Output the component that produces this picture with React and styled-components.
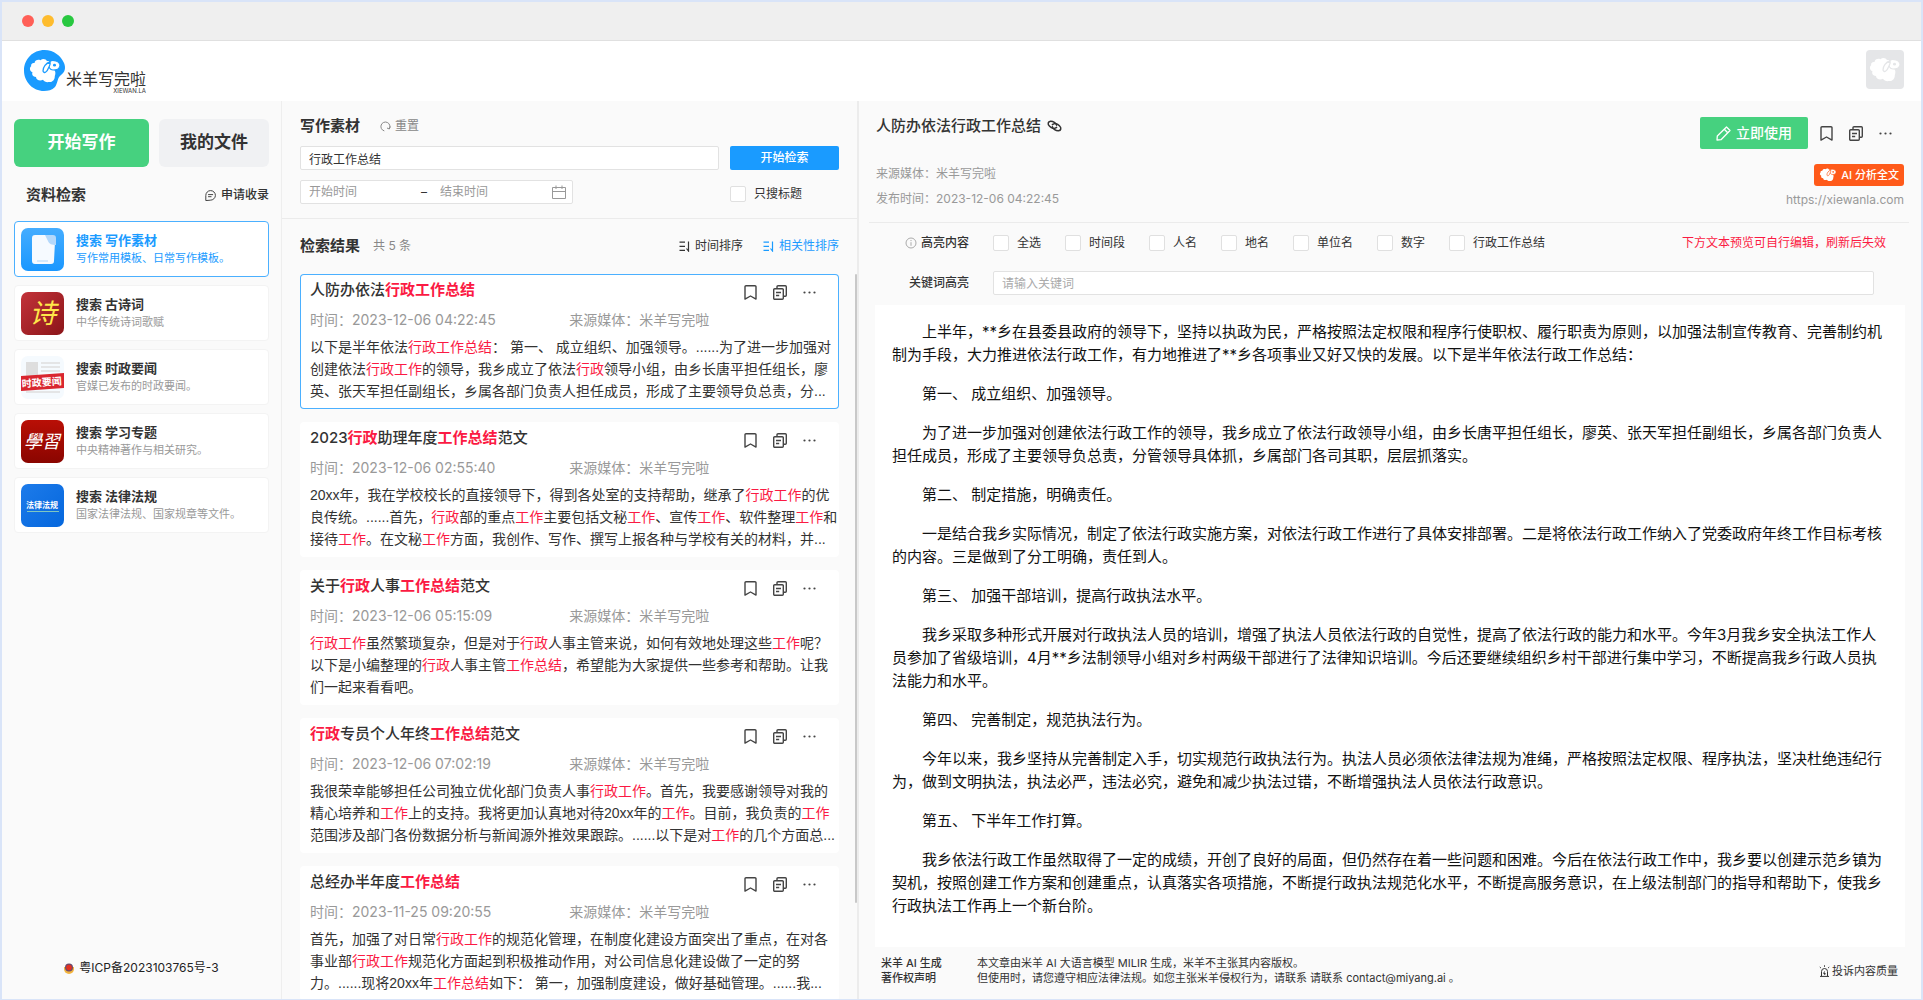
import React, {useState} from 'react';
import styled, {createGlobalStyle} from 'styled-components';

const GlobalStyle = createGlobalStyle`
  * {
    box-sizing: border-box;
  }

  body {
    margin: 0;
    color: #333;
    font-family: Inter, "Noto Sans CJK SC", sans-serif;
    font-size: 12px;
    line-height: 20px;
  }

  button, input {
    font: inherit;
    color: inherit;
  }

  button {
    padding: 0;
    border: 0;
    background: none;
    cursor: pointer;
  }

  svg {
    display: block;
    flex: none;
  }
`;

const WindowStyle = styled.div`
  display: flex;
  flex-direction: column;
  height: 100vh;
  border: solid #d9e4f8;
  border-width: 2px 2px 1px;
  background: #fafafa;
`;

const TitleBarStyle = styled.div`
  display: flex;
  align-items: center;
  gap: 8px;
  height: 39px;
  padding-left: 20px;
  background: #efefef;
  border-bottom: 1px solid #e0e0e0;
`;

const DotStyle = styled.span`
  width: 12px;
  height: 12px;
  border-radius: 50%;
  background: ${({$color}) => $color};
`;

const HeaderStyle = styled.header`
  display: flex;
  justify-content: space-between;
  align-items: flex-start;
  height: 60px;
  padding: 9px 17px 0 22px;
  background: #fff;
`;

const LogoStyle = styled.a`
  display: flex;
  color: #333;
  text-decoration: none;

  .logo {
    &_text {
      display: flex;
      flex-direction: column;
      padding-top: 20px;
      font-size: 16px;
      line-height: 18px;
    }

    &_sub {
      font-size: 6px;
      line-height: 6px;
      text-align: right;
    }
  }
`;

const AvatarStyle = styled.button`
  display: flex;
  align-items: center;
  justify-content: center;
  width: 38px;
  height: 39px;
  border-radius: 4px;
  background: #e5e6e8;
`;

const BodyStyle = styled.div`
  display: flex;
  flex: 1;
  min-height: 0;
`;

/* ---------- sidebar ---------- */

const SidebarStyle = styled.aside`
  display: flex;
  flex-direction: column;
  flex: 0 0 280px;
  padding: 18px 12px 21px;
  border-right: 1px solid #eee;
`;

const MainButtonsStyle = styled.div`
  display: flex;
  gap: 10px;
`;

const MainButton = styled.button`
  flex: ${({$primary}) => ($primary ? 27 : 22)};
  height: 48px;
  padding-bottom: 2px;
  border-radius: 6px;
  background: ${({$primary}) => ($primary ? '#46d17f' : '#f0f1f3')};
  color: ${({$primary}) => ($primary ? '#fff' : '#333')};
  font-size: 17px;
  font-weight: bold;
`;

const SideHeadStyle = styled.div`
  display: flex;
  justify-content: space-between;
  align-items: center;
  margin: 18px 0 16px;
  padding-left: 12px;
`;

const HeadingStyle = styled.h2`
  margin: 0;
  font-size: 15px;
  font-weight: bold;
  line-height: 20px;
`;

const TextButton = styled.button`
  display: flex;
  align-items: center;
  gap: ${({$gap}) => $gap || 4}px;
  color: ${({$color}) => $color || '#333'};
  font-size: ${({$small}) => ($small ? 11 : 12)}px;
  font-weight: ${({$medium}) => ($medium ? 500 : 400)};
`;

const NavStyle = styled.nav`
  display: flex;
  flex-direction: column;
  gap: 8px;
`;

const NavItem = styled.a`
  display: flex;
  align-items: center;
  gap: 12px;
  height: 56px;
  padding-left: 6px;
  border: 1px solid ${({$active}) => ($active ? '#4bb0ff' : '#f3f3f3')};
  border-radius: 4px;
  background: #fff;
  color: ${({$active}) => ($active ? '#1a9bff' : '#333')};
  text-decoration: none;

  .nav {
    &_title {
      display: block;
      font-size: 13px;
      font-weight: bold;
      line-height: 18px;
    }

    &_desc {
      display: block;
      color: ${({$active}) => ($active ? '#1a9bff' : '#999')};
      font-size: 11px;
      line-height: 18px;
    }
  }
`;

const IcpStyle = styled.a`
  display: flex;
  align-items: center;
  justify-content: center;
  gap: 5px;
  margin-top: auto;
  color: #222;
  text-decoration: none;
`;

/* ---------- search column ---------- */

const SearchColumnStyle = styled.section`
  display: flex;
  flex-direction: column;
  flex: 0 0 577px;
  border-right: 2px solid #ececec;
  position: relative;
`;

const SearchFormStyle = styled.form`
  display: flex;
  flex-direction: column;
  gap: 10px;
  height: 118px;
  padding: 15px 18px 0;
  border-bottom: 1px solid #ebebeb;
`;

const RowStyle = styled.div`
  display: flex;
  align-items: center;
  gap: ${({$gap}) => $gap || 0}px;
`;

const TextInput = styled.input`
  flex: 1;
  min-width: 0;
  height: 24px;
  padding: 0 8px;
  border: 1px solid #e2e2e2;
  border-radius: 2px;
  background: #fff;
  outline: none;

  &::placeholder {
    color: #aaa;
  }
`;

const SearchButton = styled.button`
  width: 109px;
  height: 24px;
  border-radius: 2px;
  background: #1a9bff;
  color: #fff;
  font-weight: 500;
`;

const DateRangeStyle = styled.div`
  display: flex;
  align-items: center;
  width: 273px;
  height: 24px;
  padding: 0 6px 0 8px;
  border: 1px solid #e2e2e2;
  border-radius: 2px;
  background: #fff;

  input {
    flex: 1;
    min-width: 0;
    padding: 0;
    border: 0;
    outline: none;
    background: none;
  }

  input::placeholder {
    color: #999;
  }

  span {
    width: 19px;
  }
`;

const CheckLabel = styled.label`
  display: flex;
  align-items: center;
  gap: 8px;

  input {
    appearance: none;
    width: 16px;
    height: 16px;
    margin: 0;
    border: 1px solid #e0e0e0;
    border-radius: 2px;
    background: #fff;
  }

  input:checked {
    background: #1a9bff;
  }
`;

const TitleOnlyLabel = styled(CheckLabel)`
  width: 109px;
  padding-top: 4px;
`;

const ResultHeadStyle = styled.div`
  display: flex;
  align-items: center;
  padding: 17px 18px 18px;
`;

const CountStyle = styled.span`
  flex: 1;
  margin-left: 13px;
  color: #888;
`;

const ResultListStyle = styled.div`
  display: flex;
  flex-direction: column;
  gap: 13px;
  flex: 1;
  min-height: 0;
  padding: 0 18px;
  overflow: hidden;
`;

const ScrollThumb = styled.span`
  position: absolute;
  top: 173px;
  right: 0;
  width: 2px;
  height: 70%;
  border-radius: 2px;
  background: #c8c8c8;
`;

const CardStyle = styled.article`
  flex: none;
  padding: 6px 0 7px 10px;
  border-radius: 4px;
  background: #fff;
  box-shadow: ${({$active}) => ($active ? 'inset 0 0 0 1px #4bb0ff' : 'none')};

  em {
    color: #fb1a43;
    font-style: normal;
  }

  .card {
    &_head {
      display: flex;
      justify-content: space-between;
      align-items: flex-end;
      height: 20px;
      padding-right: 23px;
    }

    &_title {
      margin: 0;
      font-size: 15px;
      font-weight: 500;
      line-height: 20px;
    }

    &_title em {
      font-weight: bold;
    }

    &_meta {
      display: flex;
      margin: 10px 0 6px;
      color: #999;
      font-size: 14px;
    }

    &_meta span {
      flex: 0 0 49%;
    }

    &_text {
      margin: 0;
      font-family: "Liberation Sans", "Noto Sans CJK SC", sans-serif;
      font-size: 14px;
      line-height: 22px;
    }
  }
`;

/* ---------- article column ---------- */

const DetailStyle = styled.section`
  display: flex;
  flex-direction: column;
  flex: 1;
  min-width: 0;
`;

const DetailHeadStyle = styled.div`
  display: flex;
  flex-direction: column;
  gap: 15px;
  margin: 0 12px 0 10px;
  padding: 16px 5px 12px 7px;
  border-bottom: 1px solid #ebebeb;
`;

const SplitStyle = styled.div`
  display: flex;
  justify-content: space-between;
  align-items: flex-start;
`;

const DetailTitle = styled.h1`
  display: flex;
  align-items: center;
  gap: 6px;
  margin: 0;
  font-size: 15px;
  font-weight: 500;
  line-height: 18px;
`;

const DetailActions = styled.div`
  display: flex;
  align-items: center;
  gap: 12px;
  padding-right: 12px;
`;

const UseButton = styled.button`
  display: flex;
  align-items: center;
  justify-content: center;
  gap: 5px;
  width: 108px;
  height: 32px;
  border-radius: 2px;
  background: #46d17f;
  color: #fff;
  font-size: 14px;
  font-weight: 500;
`;

const ColumnStyle = styled.div`
  display: flex;
  flex-direction: column;
  align-items: ${({$end}) => ($end ? 'flex-end' : 'flex-start')};
  gap: ${({$end}) => ($end ? 4 : 5)}px;
  color: #999;
`;

const AiButton = styled.button`
  display: flex;
  align-items: center;
  gap: 4px;
  height: 22px;
  padding: 0 5px;
  border-radius: 3px;
  background: #ff5a1a;
  color: #fff;
  font-size: 11px;
  font-weight: 500;
`;

const UrlLink = styled.a`
  color: #999;
  text-decoration: none;
`;

const FilterStyle = styled.div`
  display: flex;
  flex-direction: column;
  gap: 20px;
  padding: 12px 35px 10px 0;
`;

const FilterRow = styled.div`
  display: flex;
  align-items: center;
  gap: 24px;
  height: ${({$tall}) => ($tall ? 24 : 16)}px;
  padding-right: ${({$tall}) => ($tall ? 12 : 0)}px;
`;

const FilterLabel = styled.label`
  display: flex;
  align-items: center;
  justify-content: flex-end;
  gap: 4px;
  width: 110px;
  font-weight: 500;
`;

const WarnStyle = styled.span`
  margin-left: auto;
  color: #fb1a43;
`;

const SheetStyle = styled.article`
  flex: 1;
  min-height: 0;
  margin: 0 16px;
  padding: 15px 16px 0 17px;
  overflow: hidden;
  background: #fff;
  color: #111;
  font-size: 15px;
  line-height: 23px;

  p {
    margin: 0 0 16px;
    text-indent: 30px;
    white-space: pre-wrap;
  }
`;

const FooterStyle = styled.footer`
  display: flex;
  align-items: center;
  padding: 9px 23px 13px 22px;
  font-size: 11px;
  line-height: 15px;

  strong {
    width: 96px;
    font-weight: 500;
  }

  p {
    flex: 1;
    margin: 0;
  }
`;

/* ---------- icons ---------- */

const SheepShape = ({color, back}) => (
    <>
        <path fill={color}
              d="M10.500 13C11 10 14 9 16.500 10.200C18.500 8.300 22 8.800 23 11.200C26 10.500 27.500 13 27 15L28.500 19C31.500 20 32 23 30.800 26C31 30 28 32.500 25 32C22.500 32.500 20 31.500 19 29.800C16 31.500 12 30 12 27C9 27 7.500 24.500 8.500 22.300C5.500 21 5.300 17.500 7.200 16.200C6.500 14 8.500 12.500 10.500 13Z"/>
        <path fill={color} stroke={back} strokeWidth="1.200"
              d="M25 13C26 10 29 10 32 11C36 12 37 16 35 18C34 20 31 20 29 20C26 20 24 17 25 13Z"/>
        <path fill={color} stroke={back} strokeWidth="1.300"
              d="M26 12C22 13 19 17 19 21C20 24 23 22 24 19C25 16 27 15 26 12Z"/>
        <ellipse cx="30.500" cy="15.200" rx="1.500" ry="1.400" fill={back}/>
    </>
)

const Sheep = ({width, height, color, back}) => (
    <svg width={width} height={height} viewBox="5 8 32 26">
        <SheepShape color={color} back={back}/>
    </svg>
)

const LogoMark = () => (
    <svg width="42" height="41" viewBox="0 0 42 41">
        <path fill="#1a9bff"
              d="M20.500 0C30 0 37 6 40 13C42 18 41 22 37 25C33 28 34 33 31 37C28 40 24 41 20 41C9 41 0 32 0 20.500C0 9 9 0 20.500 0Z"/>
        <SheepShape color="#fff" back="#1a9bff"/>
    </svg>
)

const Bookmark = () => (
    <svg width="13" height="15" viewBox="0 0 13 15" fill="none" stroke="#444" strokeWidth="1.400" strokeLinejoin="round">
        <path d="M2 .8h9a1 1 0 0 1 1 1v12.300L6.500 11L1 14.100V1.800a1 1 0 0 1 1-1Z"/>
    </svg>
)

const Copy = () => (
    <svg width="14" height="15" viewBox="0 0 14 15" fill="none" stroke="#444" strokeWidth="1.400" strokeLinejoin="round">
        <path d="M4 3.500V1.700a1 1 0 0 1 1-1h7.300a1 1 0 0 1 1 1v8.600a1 1 0 0 1-1 1H10.300"/>
        <path d="M1.700 3.700h7.600a1 1 0 0 1 1 1v8.600a1 1 0 0 1-1 1H1.700a1 1 0 0 1-1-1V4.700a1 1 0 0 1 1-1Z"/>
        <path d="M3 7.500h5M3 10.500h3.200"/>
    </svg>
)

const More = () => (
    <svg width="13" height="15" viewBox="0 0 13 15" fill="#444">
        <circle cx="1.500" cy="7.500" r="1.100"/>
        <circle cx="6.500" cy="7.500" r="1.100"/>
        <circle cx="11.500" cy="7.500" r="1.100"/>
    </svg>
)

const Apply = () => (
    <svg width="11" height="11" viewBox="0 0 11 11" fill="none" stroke="#444" strokeLinecap="round">
        <path d="M.8 10.200V5.500A4.800 4.800 0 1 1 5.600 10.200Z"/>
        <path d="M3.500 4.600h4.200M3.500 6.700h2.600"/>
    </svg>
)

const Reset = () => (
    <svg width="11" height="11" viewBox="0 0 11 11" fill="none" stroke="#888">
        <path d="M4.300 9.900A4.500 4.500 0 1 1 9.300 7.800"/>
        <path d="M10.300 5.500L9.300 8L7 7"/>
    </svg>
)

const Calendar = () => (
    <svg width="14" height="14" viewBox="0 0 14 14" fill="none" stroke="#999">
        <path d="M.5 2.500h13v11H.5ZM.5 6.500h13M4 .5v3.500M10 .5v3.500"/>
    </svg>
)

const Sort = () => (
    <svg width="12" height="11" viewBox="0 0 12 11" fill="none" stroke="currentColor" strokeWidth="1.200">
        <path d="M.5 1.200h5.500M.5 5.300h5.500M.5 9.400h5.500"/>
        <path d="M9.500 .5v9.500M7.500 7.500l2 2.500V7"/>
    </svg>
)

const Chain = () => (
    <svg width="15" height="12" viewBox="0 0 15 12" fill="none" stroke="#333" strokeWidth="1.500" strokeLinecap="round">
        <path d="M9.600 7.400C7.500 9.200 4.500 8.200 2.600 6.300C.2 4 1 1.500 3.500 1.200C6 1 9.300 3 9.600 5.200"/>
        <path d="M5.400 4.600C7.500 2.800 10.500 3.800 12.400 5.700C14.800 8 14 10.500 11.500 10.800C9 11 5.700 9 5.400 6.800"/>
    </svg>
)

const Pen = () => (
    <svg width="15" height="15" viewBox="0 0 15 15" fill="none" stroke="#fff" strokeWidth="1.300" strokeLinejoin="round">
        <path d="M10.500 1L14 4.500L5 13.700L1 14L1.300 10Z"/>
        <path d="M8.300 3.300L11.700 6.800"/>
    </svg>
)

const Info = () => (
    <svg width="12" height="12" viewBox="0 0 12 12" fill="none" stroke="#aaa">
        <circle cx="6" cy="6" r="5"/>
        <path d="M6 5.200v3.600M6 3v1.100"/>
    </svg>
)

const Alarm = () => (
    <svg width="11" height="12" viewBox="0 0 11 12" fill="none" stroke="#333">
        <path d="M1 11.400h9M2.500 11V6.500a3 3 0 0 1 6 0V11M5.500 6.500L4.700 8.500h1.600L5.500 10M5.500 .3v1.500M.8 2l1.100 1M10.200 2l-1.100 1"/>
    </svg>
)

const Badge = () => (
    <svg width="10" height="11" viewBox="0 0 10 11">
        <path fill="#f2b33d" d="M0 4h10v2a5 5 0 0 1-10 0Z"/>
        <circle cx="5" cy="4.500" r="4" fill="#6a4a6c"/>
        <circle cx="5" cy="4.500" r="2.800" fill="#e23122"/>
    </svg>
)

const tileText = {textAnchor: 'middle', fontFamily: '"Noto Sans CJK SC", sans-serif'}

const Tile = ({kind}) => (
    <svg width="43" height="43" viewBox="0 0 43 43">
        <defs>
            <linearGradient id="tile-doc" x1="0" y1="0" x2="0" y2="1">
                <stop offset="0" stopColor="#45adff"/>
                <stop offset="1" stopColor="#1a97ff"/>
            </linearGradient>
            <linearGradient id="tile-poem" x1="0" y1="0" x2="1" y2="1">
                <stop offset="0" stopColor="#c3333a"/>
                <stop offset="1" stopColor="#8b1519"/>
            </linearGradient>
            <linearGradient id="tile-study" x1="0" y1="0" x2="0" y2="1">
                <stop offset="0" stopColor="#b90f06"/>
                <stop offset="1" stopColor="#8a0500"/>
            </linearGradient>
            <linearGradient id="tile-law" x1="0" y1="0" x2="1" y2="1">
                <stop offset="0" stopColor="#1d7bea"/>
                <stop offset="1" stopColor="#0567dd"/>
            </linearGradient>
        </defs>
        {kind !== 'news' && <rect width="43" height="43" rx="7" fill={`url(#tile-${kind})`}/>}
        {kind === 'doc' && (
            <>
                <path fill="#f6faff" d="M14 7h12l8 7-1 19a3 3 0 0 1-3 3H14a3 3 0 0 1-3-3V10a3 3 0 0 1 3-3Z"/>
                <path fill="#b4d8fb" d="M24 7h8a3 3 0 0 1 3 3v7c-4 0-7-1-8-4Z"/>
                <path stroke="#d3e8fc" strokeWidth="2" d="M16 33h11"/>
            </>
        )}
        {kind === 'poem' && <text x="22" y="31" fontSize="27" fontStyle="italic" fill="#ffe74a" {...tileText}>诗</text>}
        {kind === 'news' && (
            <>
                <rect width="43" height="43" rx="7" fill="#f5fafe"/>
                <path fill="#dedede" d="M5 6h12v14H5Z"/>
                <path stroke="#dedede" strokeWidth="1.500" d="M20 7h19M20 11h19M20 15h19M5 36h34"/>
                <path fill="#d9262f" d="M0 20L43 17V32L0 35Z"/>
                <text x="21" y="30" fontSize="10" fontWeight="bold" fill="#fff" transform="rotate(-4 21 30)" {...tileText}>时政要闻</text>
            </>
        )}
        {kind === 'study' && <text x="21" y="28" fontSize="18" fontStyle="italic" fill="#fff" {...tileText}>學習</text>}
        {kind === 'law' && (
            <>
                <text x="21" y="24" fontSize="8" fontWeight="bold" fill="#fff" {...tileText}>法律法规</text>
                <path stroke="#7fc6c0" d="M6 27.500h32"/>
            </>
        )}
    </svg>
)

/* ---------- data ---------- */

const navItems = [
    {kind: 'doc', title: '搜索 写作素材', desc: '写作常用模板、日常写作模板。'},
    {kind: 'poem', title: '搜索 古诗词', desc: '中华传统诗词歌赋'},
    {kind: 'news', title: '搜索 时政要闻', desc: '官媒已发布的时政要闻。'},
    {kind: 'study', title: '搜索 学习专题', desc: '中央精神著作与相关研究。'},
    {kind: 'law', title: '搜索 法律法规', desc: '国家法律法规、国家规章等文件。'},
]

// summaries come already shortened to three lines
const results = [
    {
        title: '人防办依法行政工作总结',
        time: '2023-12-06 04:22:45',
        text: '以下是半年依法行政工作总结： 第一、 成立组织、加强领导。......为了进一步加强对创建依法行政工作的领导，我乡成立了依法行政领导小组，由乡长唐平担任组长，廖英、张天军担任副组长，乡属各部门负责人担任成员，形成了主要领导负总责，分...',
    },
    {
        title: '2023行政助理年度工作总结范文',
        time: '2023-12-06 02:55:40',
        text: '20xx年，我在学校校长的直接领导下，得到各处室的支持帮助，继承了行政工作的优良传统。......首先，行政部的重点工作主要包括文秘工作、宣传工作、软件整理工作和接待工作。在文秘工作方面，我创作、写作、撰写上报各种与学校有关的材料，并...',
    },
    {
        title: '关于行政人事工作总结范文',
        time: '2023-12-06 05:15:09',
        text: '行政工作虽然繁琐复杂，但是对于行政人事主管来说，如何有效地处理这些工作呢？以下是小编整理的行政人事主管工作总结，希望能为大家提供一些参考和帮助。让我们一起来看看吧。',
    },
    {
        title: '行政专员个人年终工作总结范文',
        time: '2023-12-06 07:02:19',
        text: '我很荣幸能够担任公司独立优化部门负责人事行政工作。首先，我要感谢领导对我的精心培养和工作上的支持。我将更加认真地对待20xx年的工作。目前，我负责的工作范围涉及部门各份数据分析与新闻源外推效果跟踪。......以下是对工作的几个方面总...',
    },
    {
        title: '总经办半年度工作总结',
        time: '2023-11-25 09:20:55',
        text: '首先，加强了对日常行政工作的规范化管理，在制度化建设方面突出了重点，在对各事业部行政工作规范化方面起到积极推动作用，对公司信息化建设做了一定的努力。......现将20xx年工作总结如下： 第一，加强制度建设，做好基础管理。......我...',
    },
]

const filters = ['全选', '时间段', '人名', '地名', '单位名', '数字', '行政工作总结']

const paragraphs = [
    '上半年，**乡在县委县政府的领导下，坚持以执政为民，严格按照法定权限和程序行使职权、履行职责为原则，以加强法制宣传教育、完善制约机制为手段，大力推进依法行政工作，有力地推进了**乡各项事业又好又快的发展。以下是半年依法行政工作总结：',
    '第一、 成立组织、加强领导。',
    '为了进一步加强对创建依法行政工作的领导，我乡成立了依法行政领导小组，由乡长唐平担任组长，廖英、张天军担任副组长，乡属各部门负责人担任成员，形成了主要领导负总责，分管领导具体抓，乡属部门各司其职，层层抓落实。',
    '第二、 制定措施，明确责任。',
    '一是结合我乡实际情况，制定了依法行政实施方案，对依法行政工作进行了具体安排部署。二是将依法行政工作纳入了党委政府年终工作目标考核的内容。三是做到了分工明确，责任到人。',
    '第三、 加强干部培训，提高行政执法水平。',
    '我乡采取多种形式开展对行政执法人员的培训，增强了执法人员依法行政的自觉性，提高了依法行政的能力和水平。今年3月我乡安全执法工作人员参加了省级培训，4月**乡法制领导小组对乡村两级干部进行了法律知识培训。今后还要继续组织乡村干部进行集中学习，不断提高我乡行政人员执法能力和水平。',
    '第四、 完善制定，规范执法行为。',
    '今年以来，我乡坚持从完善制定入手，切实规范行政执法行为。执法人员必须依法律法规为准绳，严格按照法定权限、程序执法，坚决杜绝违纪行为，做到文明执法，执法必严，违法必究，避免和减少执法过错，不断增强执法人员依法行政意识。',
    '第五、 下半年工作打算。',
    '我乡依法行政工作虽然取得了一定的成绩，开创了良好的局面，但仍然存在着一些问题和困难。今后在依法行政工作中，我乡要以创建示范乡镇为契机，按照创建工作方案和创建重点，认真落实各项措施，不断提行政执法规范化水平，不断提高服务意识，在上级法制部门的指导和帮助下，使我乡行政执法工作再上一个新台阶。',
]

function highlight(text) {
    return text.split(/((?:行政|工作|总结)+)/).map((part, i) =>
        i % 2 ? <em key={i}>{part}</em> : part
    )
}

const Tools = () => (
    <RowStyle $gap={16}>
        <button aria-label="收藏"><Bookmark/></button>
        <button aria-label="复制"><Copy/></button>
        <button aria-label="更多"><More/></button>
    </RowStyle>
)

function Sidebar() {
    return (
        <SidebarStyle>
            <MainButtonsStyle>
                <MainButton $primary>开始写作</MainButton>
                <MainButton>我的文件</MainButton>
            </MainButtonsStyle>
            <SideHeadStyle>
                <HeadingStyle>资料检索</HeadingStyle>
                <TextButton $gap={5} $medium><Apply/>申请收录</TextButton>
            </SideHeadStyle>
            <NavStyle>
                {navItems.map((item, i) => (
                    <NavItem key={item.kind} href="#" $active={i === 0}>
                        <Tile kind={item.kind}/>
                        <span>
                            <span className={"nav_title"}>{item.title}</span>
                            <span className={"nav_desc"}>{item.desc}</span>
                        </span>
                    </NavItem>
                ))}
            </NavStyle>
            <IcpStyle href="#"><Badge/>粤ICP备2023103765号-3</IcpStyle>
        </SidebarStyle>
    )
}

function SearchColumn() {
    const [keyword, setKeyword] = useState('行政工作总结')

    return (
        <SearchColumnStyle>
            <SearchFormStyle onSubmit={(e) => e.preventDefault()}>
                <RowStyle $gap={20}>
                    <HeadingStyle>写作素材</HeadingStyle>
                    <TextButton type="reset" $color="#888"><Reset/>重置</TextButton>
                </RowStyle>
                <RowStyle $gap={11}>
                    <TextInput aria-label="关键词" value={keyword} onChange={(e) => setKeyword(e.target.value)}/>
                    <SearchButton type="submit">开始检索</SearchButton>
                </RowStyle>
                <SplitStyle>
                    <DateRangeStyle>
                        <input aria-label="开始时间" placeholder="开始时间"/>
                        <span>–</span>
                        <input aria-label="结束时间" placeholder="结束时间"/>
                        <Calendar/>
                    </DateRangeStyle>
                    <TitleOnlyLabel><input type="checkbox"/>只搜标题</TitleOnlyLabel>
                </SplitStyle>
            </SearchFormStyle>
            <ResultHeadStyle>
                <HeadingStyle>检索结果</HeadingStyle>
                <CountStyle>共 5 条</CountStyle>
                <RowStyle $gap={20}>
                    <TextButton><Sort/>时间排序</TextButton>
                    <TextButton $color="#1a9bff"><Sort/>相关性排序</TextButton>
                </RowStyle>
            </ResultHeadStyle>
            <ResultListStyle>
                {results.map((item, i) => (
                    <CardStyle key={item.time} $active={i === 0}>
                        <div className={"card_head"}>
                            <h3 className={"card_title"}>{highlight(item.title)}</h3>
                            <Tools/>
                        </div>
                        <div className={"card_meta"}>
                            <span>时间：{item.time}</span>
                            <span>来源媒体：米羊写完啦</span>
                        </div>
                        <p className={"card_text"}>{highlight(item.text)}</p>
                    </CardStyle>
                ))}
            </ResultListStyle>
            <ScrollThumb/>
        </SearchColumnStyle>
    )
}

function Detail() {
    return (
        <DetailStyle>
            <DetailHeadStyle>
                <SplitStyle>
                    <DetailTitle>人防办依法行政工作总结<Chain/></DetailTitle>
                    <DetailActions>
                        <UseButton><Pen/>立即使用</UseButton>
                        <Tools/>
                    </DetailActions>
                </SplitStyle>
                <SplitStyle>
                    <ColumnStyle>
                        <span>来源媒体：米羊写完啦</span>
                        <span>发布时间：2023-12-06 04:22:45</span>
                    </ColumnStyle>
                    <ColumnStyle $end>
                        <AiButton><Sheep width={18} height={14} color="#fff" back="#ff5a1a"/>AI 分析全文</AiButton>
                        <UrlLink href="#">https://xiewanla.com</UrlLink>
                    </ColumnStyle>
                </SplitStyle>
            </DetailHeadStyle>
            <FilterStyle>
                <FilterRow>
                    <FilterLabel as="span"><Info/>高亮内容</FilterLabel>
                    {filters.map((name) => (
                        <CheckLabel key={name}><input type="checkbox"/>{name}</CheckLabel>
                    ))}
                    <WarnStyle>下方文本预览可自行编辑，刷新后失效</WarnStyle>
                </FilterRow>
                <FilterRow $tall>
                    <FilterLabel htmlFor="hl">关键词高亮</FilterLabel>
                    <TextInput id="hl" placeholder="请输入关键词"/>
                </FilterRow>
            </FilterStyle>
            <SheetStyle>
                {paragraphs.map((text) => <p key={text}>{text}</p>)}
            </SheetStyle>
            <FooterStyle>
                <strong>米羊 AI 生成<br/>著作权声明</strong>
                <p>
                    本文章由米羊 AI 大语言模型 MILIR 生成，米羊不主张其内容版权。<br/>
                    但使用时，请您遵守相应法律法规。如您主张米羊侵权行为，请联系 请联系 contact@miyang.ai 。
                </p>
                <TextButton $small $gap={2}><Alarm/>投诉内容质量</TextButton>
            </FooterStyle>
        </DetailStyle>
    )
}

export default function App() {
    return (
        <WindowStyle>
            <GlobalStyle/>
            <TitleBarStyle>
                <DotStyle $color="#ff5f57"/>
                <DotStyle $color="#febc2e"/>
                <DotStyle $color="#28c840"/>
            </TitleBarStyle>
            <HeaderStyle>
                <LogoStyle href="#">
                    <LogoMark/>
                    <span className={"logo_text"}>
                        米羊写完啦
                        <span className={"logo_sub"}>XIEWAN.LA</span>
                    </span>
                </LogoStyle>
                <AvatarStyle aria-label="账号">
                    <Sheep width={32} height={26} color="#fff" back="#e5e6e8"/>
                </AvatarStyle>
            </HeaderStyle>
            <BodyStyle>
                <Sidebar/>
                <SearchColumn/>
                <Detail/>
            </BodyStyle>
        </WindowStyle>
    )
}
